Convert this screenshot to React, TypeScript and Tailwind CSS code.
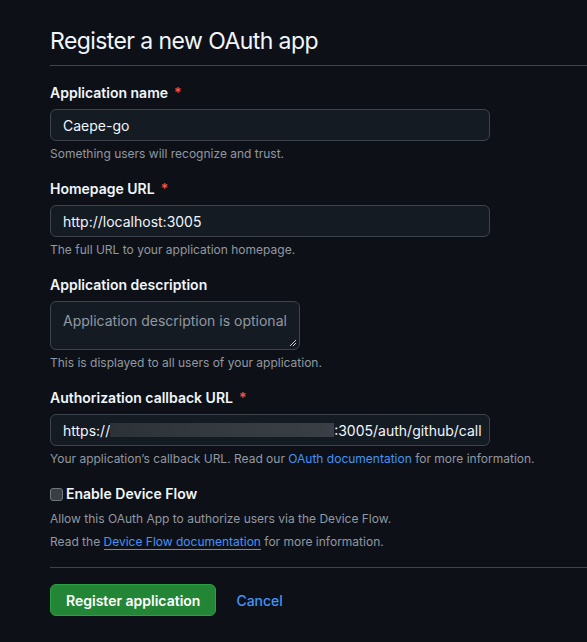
import React from "react";

const font = { fontFamily: "Inter, 'Noto Sans', sans-serif" };

function Label({ children, required }: { children: React.ReactNode; required?: boolean }) {
  return (
    <div className="text-[14px] font-semibold leading-[20px] text-[#f0f6fc] mb-[6px]">
      {children}
      {required && <span className="text-[#f85149] ml-[6px]">*</span>}
    </div>
  );
}

function Note({ children }: { children: React.ReactNode }) {
  return <p className="text-[12px] leading-[18px] text-[#9198a1] mt-[4px]">{children}</p>;
}

function TextInput({ value }: { value: string }) {
  return (
    <div className="w-[440px] h-[32px] rounded-[6px] border border-[#3d444d] bg-[#151b23] px-3 flex items-center text-[14px] text-[#f0f6fc]">
      {value}
    </div>
  );
}

export default function App() {
  return (
    <div style={font} className="min-h-[642px] w-full bg-[#0d1117] pl-[50px] pt-[26px] overflow-hidden">
      <h2 className="text-[23px] tracking-[-0.025em] leading-[30px] font-normal text-[#f0f6fc] pb-[9px] border-b border-[#3d444d]">
        Register a new OAuth app
      </h2>

      <div className="mt-[17px]">
        <Label required>Application name</Label>
        <TextInput value="Caepe-go" />
        <Note>Something users will recognize and trust.</Note>
      </div>

      <div className="mt-[16px]">
        <Label required>Homepage URL</Label>
        <TextInput value="http://localhost:3005" />
        <Note>The full URL to your application homepage.</Note>
      </div>

      <div className="mt-[16px]">
        <Label>Application description</Label>
        <div className="relative w-[250px] h-[49px] rounded-[6px] border border-[#3d444d] bg-[#151b23] px-3 pt-[9px] text-[14px] leading-[20px] text-[#9198a1]">
          Application description is optional
          <svg className="absolute right-[2px] bottom-[2px]" width="8" height="8" viewBox="0 0 8 8">
            <path d="M7 1 L1 7 M7 4 L4 7" stroke="#c9d1d9" strokeWidth="1" />
          </svg>
        </div>
        <Note>This is displayed to all users of your application.</Note>
      </div>

      <div className="mt-[16px]">
        <Label required>Authorization callback URL</Label>
        <div className="w-[440px] h-[32px] rounded-[6px] border border-[#3d444d] bg-[#151b23] pl-3 flex items-center text-[14px] text-[#f0f6fc] whitespace-nowrap overflow-hidden">
          https://
          <span className="inline-block h-[14px] w-[224px] bg-gradient-to-r from-[#2d3138] via-[#353a41] to-[#3a3f46] blur-[0.5px]" />
          :3005/auth/github/call
        </div>
        <p className="text-[12px] leading-[18px] text-[#9198a1] mt-[4px]">
          Your application’s callback URL. Read our{" "}
          <span className="text-[#4493f8]">OAuth documentation</span> for more information.
        </p>
      </div>

      <div className="mt-[16px]">
        <div className="flex items-center gap-[3px]">
          <span className="w-[13px] h-[13px] rounded-[3px] border border-[#6e7681] bg-[#3a3d42]" />
          <span className="text-[14px] font-semibold leading-[20px] text-[#f0f6fc]">Enable Device Flow</span>
        </div>
        <p className="text-[12px] leading-[18px] text-[#9198a1] mt-[6px]">
          Allow this OAuth App to authorize users via the Device Flow.
        </p>
        <p className="text-[12px] leading-[18px] text-[#9198a1] mt-[5px]">
          Read the{" "}
          <span className="text-[#4493f8] border-b border-[#4493f8]">Device Flow documentation</span> for more
          information.
        </p>
      </div>

      <div className="mt-[16px] border-t border-[#3d444d] pt-[16px] flex items-center gap-[20px]">
        <button className="h-[32px] px-[15px] rounded-[6px] bg-[#238636] border border-[#2ea043] text-[14px] font-semibold text-white">
          Register application
        </button>
        <span className="text-[14px] font-medium text-[#4493f8]">Cancel</span>
      </div>
    </div>
  );
}
